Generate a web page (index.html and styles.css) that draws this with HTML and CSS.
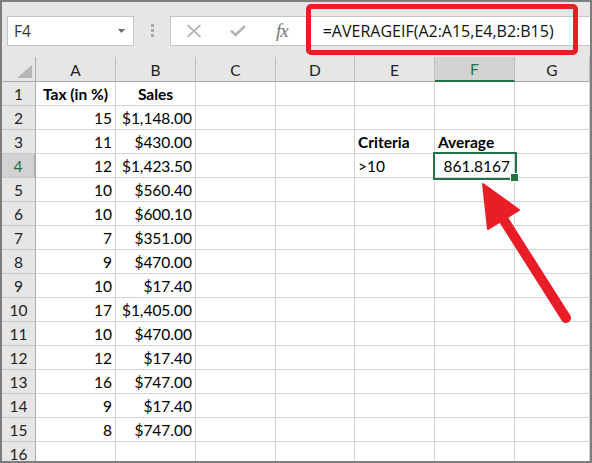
FILE: index.html
```html
<!DOCTYPE html>
<html lang="en">
<head>
    <meta charset="UTF-8">
    <title>AVERAGEIF example</title>
    <link rel="stylesheet" href="styles.css">
</head>
<body>
    <div class="window">
        <div class="toolbar">
            <div class="name-box">
                <span>F4</span>
                <svg class="caret" width="7" height="4"><polygon points="0,0 7,0 3.5,4"/></svg>
            </div>
            <div class="grip"><i></i><i></i><i></i></div>
            <div class="formula-bar">
                <svg class="btn-icon" width="16" height="14"><path d="M1.5 1 L14.5 13 M14.5 1 L1.5 13"/></svg>
                <svg class="btn-icon check" width="16" height="12"><path d="M1 5.5 L5.5 10 L15 1"/></svg>
                <span class="fx">fx</span>
                <span class="formula">=AVERAGEIF(A2:A15,E4,B2:B15)</span>
            </div>
        </div>

        <table class="sheet">
            <colgroup>
                <col class="c-hdr"><col class="c-std"><col class="c-std"><col class="c-std">
                <col class="c-d"><col class="c-std"><col class="c-std"><col class="c-g">
            </colgroup>
            <tr class="col-heads">
                <th class="corner"><svg width="15" height="13"><polygon points="15,0 15,13 0,13"/></svg></th>
                <th>A</th><th>B</th><th>C</th><th>D</th><th>E</th><th class="active-col">F</th><th>G</th>
            </tr>
            <tr><th>1</th><td class="bold center">Tax (in %)</td><td class="bold center">Sales</td><td></td><td></td><td></td><td></td><td></td></tr>
            <tr><th>2</th><td class="num">15</td><td class="num">$1,148.00</td><td></td><td></td><td></td><td></td><td></td></tr>
            <tr><th>3</th><td class="num">11</td><td class="num">$430.00</td><td></td><td></td><td class="bold">Criteria</td><td class="bold">Average</td><td></td></tr>
            <tr><th class="active-row">4</th><td class="num">12</td><td class="num">$1,423.50</td><td></td><td></td><td>&gt;10</td><td class="num selected">861.8167</td><td></td></tr>
            <tr><th>5</th><td class="num">10</td><td class="num">$560.40</td><td></td><td></td><td></td><td></td><td></td></tr>
            <tr><th>6</th><td class="num">10</td><td class="num">$600.10</td><td></td><td></td><td></td><td></td><td></td></tr>
            <tr><th>7</th><td class="num">7</td><td class="num">$351.00</td><td></td><td></td><td></td><td></td><td></td></tr>
            <tr><th>8</th><td class="num">9</td><td class="num">$470.00</td><td></td><td></td><td></td><td></td><td></td></tr>
            <tr><th>9</th><td class="num">10</td><td class="num">$17.40</td><td></td><td></td><td></td><td></td><td></td></tr>
            <tr><th>10</th><td class="num">17</td><td class="num">$1,405.00</td><td></td><td></td><td></td><td></td><td></td></tr>
            <tr><th>11</th><td class="num">10</td><td class="num">$470.00</td><td></td><td></td><td></td><td></td><td></td></tr>
            <tr><th>12</th><td class="num">12</td><td class="num">$17.40</td><td></td><td></td><td></td><td></td><td></td></tr>
            <tr><th>13</th><td class="num">16</td><td class="num">$747.00</td><td></td><td></td><td></td><td></td><td></td></tr>
            <tr><th>14</th><td class="num">9</td><td class="num">$17.40</td><td></td><td></td><td></td><td></td><td></td></tr>
            <tr><th>15</th><td class="num">8</td><td class="num">$747.00</td><td></td><td></td><td></td><td></td><td></td></tr>
            <tr><th>16</th><td></td><td></td><td></td><td></td><td></td><td></td><td></td></tr>
        </table>
    </div>

    <!-- annotation: red highlight round the formula and arrow to the result -->
    <div class="highlight"></div>
    <svg class="arrow" width="592" height="463">
        <line x1="566" y1="318" x2="500" y2="214"/>
        <polygon points="483,184 488,229 519,210"/>
    </svg>
</body>
</html>
```

FILE: styles.css
```css
* {
    box-sizing: border-box;
}
body {
    margin: 0;
    position: relative;
    font-family: Lato, "Open Sans", sans-serif;
    color: #000;
}
.window {
    width: 592px;
    height: 463px;
    border: 2px solid #7d7d7d;
    overflow: hidden;
    background: #fff;
}

/* formula bar */
.toolbar {
    display: flex;
    align-items: flex-start;
    height: 55px;
    padding: 14px 0 0 5px;
    background: #e6e6e6;
}
.name-box {
    display: flex;
    align-items: center;
    justify-content: space-between;
    width: 127px;
    height: 30px;
    padding: 0 8px 0 6px;
    background: #fff;
    border: 1px solid #c6c6c6;
    font-family: "Open Sans", sans-serif;
    font-size: 15.5px;
    color: #333;
}
.caret {
    fill: #6a6a6a;
}
.grip {
    display: flex;
    flex-direction: column;
    gap: 2px;
    margin: 8px 0 0 17px;
}
.grip i {
    width: 3px;
    height: 3px;
    background: #a8a8a8;
}
.formula-bar {
    flex: 1;
    display: flex;
    align-items: center;
    height: 30px;
    margin-left: 16px;
    padding-left: 15px;
    background: #fff;
    border: 1px solid #c6c6c6;
    border-right: none;
}
.btn-icon {
    fill: none;
    stroke: #a9a9a9;
    stroke-width: 1.6;
}
.btn-icon.check {
    margin-left: 28px;
    stroke: #b4b4b4;
    stroke-width: 2.6;
}
.fx {
    margin-left: 30px;
    font-family: "Liberation Serif", serif;
    font-style: italic;
    font-size: 19px;
    color: #777;
    letter-spacing: -1px;
}
.formula {
    margin-left: 35px;
    font-family: "Open Sans", sans-serif;
    font-size: 16px;
    color: #111;
}

/* grid */
.sheet {
    table-layout: fixed;
    width: 588px;
    border-collapse: separate;
    border-spacing: 0;
    font-size: 15.5px;
}
.c-hdr { width: 34px; }
.c-std { width: 80px; }
.c-d { width: 79px; }
.c-g { width: 75px; }
.sheet th,
.sheet td {
    height: 24px;
    padding: 2px 3px 0;
    line-height: 21px;
    border-right: 1px solid #d4d4d4;
    border-bottom: 1px solid #d4d4d4;
    white-space: nowrap;
    overflow: hidden;
    text-align: left;
}
.sheet th {
    background: #e6e6e6;
    font-weight: normal;
    text-align: center;
    color: #222;
    border-right-color: #bdbdbd;
    border-bottom-color: #c8c8c8;
}
.sheet tr > th:first-child {
    border-right-color: #ababab;
}
.col-heads th {
    border-bottom-color: #ababab;
}
.corner {
    vertical-align: bottom;
    padding: 0 !important;
    text-align: right !important;
    line-height: 0 !important;
}
.corner svg {
    margin: 0 3px 3px 0;
    fill: #b5b5b5;
}
.sheet th.active-col {
    background: #d2d2d2;
    color: #217346;
    border-bottom: 2px solid #217346;
}
.sheet th.active-row {
    background: #d2d2d2;
    color: #217346;
    border-right: 2px solid #217346;
}
.sheet td.num {
    text-align: right;
}
.sheet td.center {
    text-align: center;
}
.sheet td.bold {
    font-weight: bold;
}
.sheet td.selected {
    position: relative;
    overflow: visible;
    outline: 2px solid #217346;
    padding-right: 4px;
}
.sheet td.selected::after {
    content: "";
    position: absolute;
    right: -5px;
    bottom: -5px;
    width: 7px;
    height: 7px;
    background: #217346;
    border: 1px solid #fff;
}

/* annotation overlay */
.highlight {
    position: absolute;
    left: 306px;
    top: 4px;
    width: 272px;
    height: 51px;
    border: 5.5px solid #e81d25;
    border-radius: 5px;
}
.arrow {
    position: absolute;
    left: 0;
    top: 0;
    pointer-events: none;
}
.arrow line {
    stroke: #e81d25;
    stroke-width: 10;
    stroke-linecap: round;
}
.arrow polygon {
    fill: #e81d25;
    stroke: #e81d25;
    stroke-width: 2;
    stroke-linejoin: round;
}
```
